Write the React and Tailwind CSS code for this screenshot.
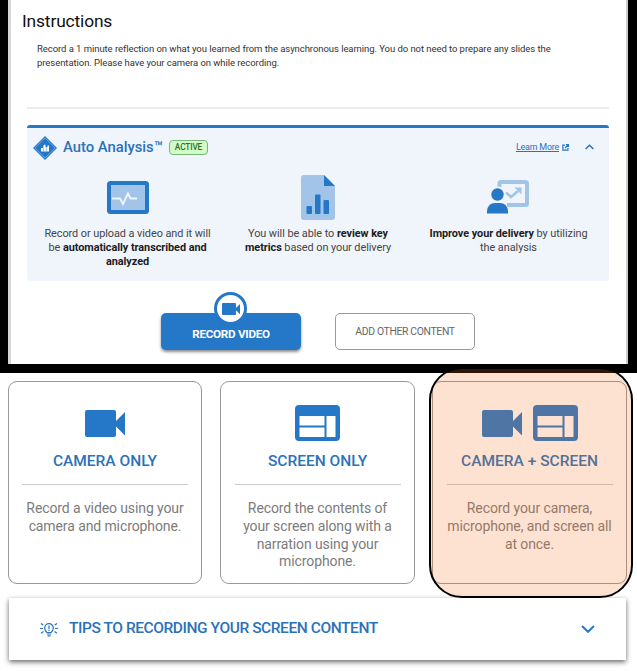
import React from "react";

function Camera({ className }) {
  return (
    <svg viewBox="0 0 40 27" preserveAspectRatio="none" className={className} fill="currentColor">
      <path d="M2 0H29Q31 0 31 2V11L40 2V25.500L31 16.500V25Q31 27 29 27H2Q0 27 0 25V2Q0 0 2 0Z" />
    </svg>
  );
}

function Screen({ className }) {
  return (
    <svg viewBox="0 0 45 36" className={className} fill="currentColor" fillRule="evenodd">
      <path d="M4 0H41Q45 0 45 4V32Q45 36 41 36H4Q0 36 0 32V4Q0 0 4 0ZM4.500 11V20.500H29.500V11ZM4.500 22.500V32H29.500V22.500ZM31.500 11V32H40.500V11Z" />
    </svg>
  );
}

function Card({ icons, title, lines, className }) {
  return (
    <div className={`flex h-[203px] flex-col items-center rounded-[9px] border border-[#999] bg-white ${className}`}>
      <div className="mt-[23px] flex h-9 items-center gap-[11px] text-[#2577c8]">{icons}</div>
      <h3 className="mt-[8px] text-[15.500px] leading-[24px] font-medium whitespace-nowrap text-[#2b72b8]">{title}</h3>
      <div className="mt-[11px] h-px w-[166px] bg-[#ccc]" />
      <p className="mt-[15px] text-center text-[14px] leading-[17.800px] tracking-[-0.1px] text-[#7c7c7c]">
        {lines.map((l) => (
          <span key={l} className="block whitespace-nowrap">{l}</span>
        ))}
      </p>
    </div>
  );
}

function Feature({ icon, children, className }) {
  return (
    <div className={`flex flex-col items-center ${className}`}>
      <div className="flex h-[46px] items-center justify-center">{icon}</div>
      <p className="mt-[7px] text-center text-[10.900px] leading-[14px] tracking-[-0.06px] whitespace-nowrap text-[#444]">{children}</p>
    </div>
  );
}

const B = ({ children }) => <b className="font-bold text-[#1c1c1c]">{children}</b>;

export default function App() {
  return (
    <div className="relative h-[671px] w-[637px] overflow-hidden bg-white font-[Roboto,sans-serif]">
      <div className="h-[373px] bg-black pr-[9px] pb-[9px] pl-2">
        <section className="h-[364px] border-r-2 border-l-[3px] border-r-[#ccc] border-l-[#d6d6d6] bg-white">
          <h1 className="pt-[9px] pl-[11px] text-[17.400px] leading-[24px] tracking-[-0.15px] text-[#111]">Instructions</h1>
          <p className="mt-[9px] ml-[26px] text-[9.500px] leading-[14px] tracking-[-0.06px] whitespace-nowrap text-[#333]">
            Record a 1 minute reflection on what you learned from the asynchronous learning. You do not need to prepare any slides the
            <br />
            presentation. Please have your camera on while recording.
          </p>
          <div className="mt-[37px] ml-4 h-[2px] w-[582px] bg-[#ebebeb]" />
          <div className="mt-[16px] ml-4 h-[156px] w-[582px] rounded-[3px] border-t-[3px] border-[#2577c8] bg-[#f0f5fc]">
            <header className="flex h-[39px] items-center pl-[6px]">
              <svg viewBox="0 0 24 24" className="h-6 w-6">
                <path d="M12 0 24 12 12 24 0 12Z" fill="#2577c8" />
                <path d="M12 1.800 22.200 12 12 22.200 1.800 12Z" fill="none" stroke="#9fc3ea" strokeWidth=".6" />
                <path d="M8 12H10.300V10.500Q10.300 8.500 12.500 8.500V11H14.500V9.500H16V15.500H8Z" fill="white" />
                <path d="M10.500 12V15.500M13.300 11V15.500" stroke="#2577c8" strokeWidth=".5" />
              </svg>
              <h2 className="ml-[6px] text-[14.800px] font-medium whitespace-nowrap text-[#2b72b8]">Auto Analysis™</h2>
              <span className="ml-[6px] flex h-[15px] w-[39px] items-center justify-center rounded-[4px] border border-[#76b873] bg-[#d2fbc8] text-[8.300px] font-medium tracking-[-0.15px] text-[#27722a]">ACTIVE</span>
              <a className="ml-auto text-[9px] tracking-[-0.25px] whitespace-nowrap text-[#2b72b8] underline">Learn More</a>
              <svg viewBox="0 0 8 8" className="ml-[3px] h-[7px] w-[7px]" fill="none" stroke="#2577c8" strokeWidth="1.400">
                <path d="M3.300 1.300H1V7H6.800V4.700M4.500.7H7.300V3.500M7.300.7 3.400 4.600" />
              </svg>
              <svg viewBox="0 0 9 6" className="mr-[15px] mb-px ml-[16px] h-[6px] w-[9px]" fill="none" stroke="#2b72b8" strokeWidth="1.500">
                <path d="M.6 5 4.500 1.200 8.400 5" />
              </svg>
            </header>
            <div className="mt-[7px] flex">
              <Feature
                className="w-[201px]"
                icon={
                  <svg viewBox="0 0 42 33" className="h-[33px] w-[42px]">
                    <rect width="42" height="33" rx="3.500" fill="#2577c8" />
                    <path d="M4 4H38V29H4Z" fill="#a3c4e9" />
                    <path d="M5 17.500H13L16 23 21 12.500 23.500 17.500H30" fill="none" stroke="#f0f5fc" strokeWidth="1.900" />
                  </svg>
                }
              >
                Record or upload a video and it will<br />be <B>automatically transcribed and</B><br /><B>analyzed</B>
              </Feature>
              <Feature
                className="w-[180px]"
                icon={
                  <svg viewBox="0 0 34 45" className="h-[45px] w-[34px]">
                    <path d="M3 0H23L34 11V42Q34 45 31 45H3Q0 45 0 42V3Q0 0 3 0Z" fill="#a3c4e9" />
                    <path d="M23 0 34 11H23Z" fill="#2577c8" />
                    <g fill="#2577c8">
                      <rect x="5.500" y="31" width="5.500" height="8" rx="1" />
                      <rect x="14" y="19.500" width="5.500" height="19.500" rx="1" />
                      <rect x="22.500" y="25" width="5.500" height="14" rx="1" />
                    </g>
                  </svg>
                }
              >
                You will be able to <B>review key</B><br /><B>metrics</B> based on your delivery
              </Feature>
              <Feature
                className="w-[201px]"
                icon={
                  <svg viewBox="0 0 42 34" className="mr-[2px] h-[34px] w-[42px]">
                    <path d="M12.500 7V3.500Q12.500 2 14 2H38.500Q40 2 40 3.500V23.500Q40 25 38.500 25H20" fill="none" stroke="#a3c4e9" strokeWidth="4" />
                    <path d="M19 12.500 24 17 31 11" fill="none" stroke="#a3c4e9" strokeWidth="2.500" />
                    <path d="M27.500 7.500H34.500V14.500Z" fill="#a3c4e9" />
                    <circle cx="10.500" cy="14.500" r="8" fill="#f0f5fc" />
                    <circle cx="10.500" cy="14.500" r="6.200" fill="#2577c8" />
                    <path d="M0 33.500V31Q1 23 8 23H13Q20 23 21 31V33.500Z" fill="#2577c8" />
                  </svg>
                }
              >
                <B>Improve your delivery</B> by utilizing<br />the analysis
              </Feature>
            </div>
          </div>
          <div className="mt-[32px] ml-[150px] flex gap-[34px]">
            <button className="relative h-[37px] w-[140px] rounded-[5px] bg-[#2577c8] pt-[6px] text-[11.700px] font-bold tracking-[-0.3px] whitespace-nowrap text-white shadow-[0_2px_3px_rgba(0,0,0,0.45)]">
              RECORD VIDEO
              <span className="absolute -top-[21px] left-[53px] flex h-[33px] w-[33px] items-center justify-center rounded-full border-[3px] border-[#2577c8] bg-white text-[#2577c8]">
                <Camera className="h-[12px] w-[18px]" />
              </span>
            </button>
            <button className="h-[37px] w-[140px] rounded-[5px] border border-[#999] text-[10.400px] tracking-[-0.35px] whitespace-nowrap text-[#666]">ADD OTHER CONTENT</button>
          </div>
        </section>
      </div>
      <div className="flex pt-2 pl-2">
        <Card
          className="w-[194px]"
          icons={<Camera className="h-[27px] w-[40px]" />}
          title="CAMERA ONLY"
          lines={["Record a video using your", "camera and microphone."]}
        />
        <Card
          className="ml-[18px] w-[195px]"
          icons={<Screen className="h-9 w-[45px]" />}
          title="SCREEN ONLY"
          lines={["Record the contents of", "your screen along with a", "narration using your", "microphone."]}
        />
        <Card
          className="ml-[17px] w-[195px]"
          icons={<><Camera className="h-[27px] w-[40px]" /><Screen className="h-9 w-[45px]" /></>}
          title="CAMERA + SCREEN"
          lines={["Record your camera,", "microphone, and screen all", "at once."]}
        />
      </div>
      <div className="mt-[14px] ml-[9px] flex h-[62px] w-[617px] items-center bg-white shadow-[0_2px_5px_rgba(0,0,0,0.6)]">
        <svg viewBox="0 0 18 15" className="ml-[31px] h-[15px] w-[18px]" fill="none" stroke="#2b72b8" strokeWidth="1.200">
          <path d="M7 10.500Q4.700 8.800 4.700 6A4.300 4.300 0 0 1 13.300 6Q13.300 8.800 11 10.500ZM6.800 12H11.200M7.500 13.800H10.500M9 3.500V7M9 7.700V9M3.300 3 .9 1.500M14.700 3 17.100 1.500M3 6.500H0M15 6.500H18M3.500 9.500 1 11.300M14.500 9.500 17 11.300" />
        </svg>
        <h3 className="ml-[11px] text-[15.500px] font-medium tracking-[-0.43px] whitespace-nowrap text-[#2b72b8]">TIPS TO RECORDING YOUR SCREEN CONTENT</h3>
        <svg viewBox="0 0 14 8" className="mr-[31px] ml-auto h-2 w-[14px]" fill="none" stroke="#2577c8" strokeWidth="2">
          <path d="M1 1 7 6.800 13 1" />
        </svg>
      </div>
      <div className="absolute top-[367px] left-[429px] h-[231px] w-[204px] rounded-[33px] border-2 border-black bg-[rgba(250,110,25,0.2)] bg-clip-padding" />
    </div>
  );
}
